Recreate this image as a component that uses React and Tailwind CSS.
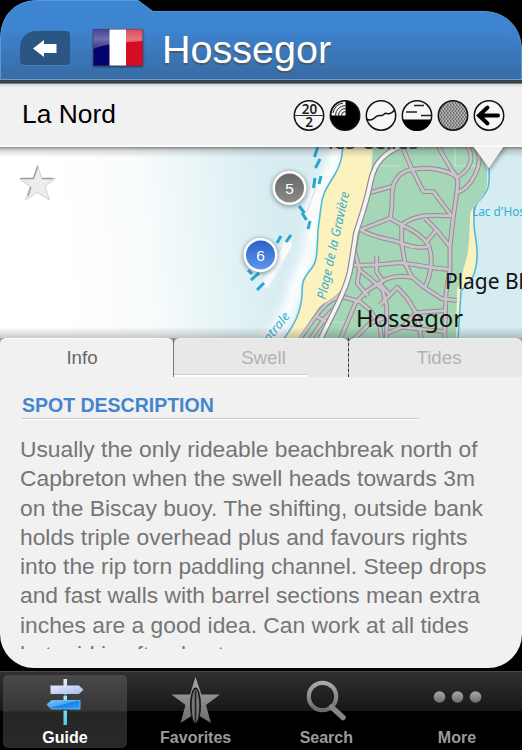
import { clsx } from 'clsx';

const lines = [
  'Usually the only rideable beachbreak north of',
  'Capbreton when the swell heads towards 3m',
  'on the Biscay buoy. The shifting, outside bank',
  'holds triple overhead plus and favours rights',
  'into the rip torn paddling channel. Steep drops',
  'and fast walls with barrel sections mean extra',
  'inches are a good idea. Can work at all tides',
  'but mid is often best.',
];

const roads = [
  'M0 158 L65 140',
  'M60 235 C72 190 60 165 72 130 C85 100 110 90 130 88 C180 80 230 90 260 110',
  'M92 10 L125 85 L160 155 L190 155 L243 225',
  'M200 10 C220 50 235 70 245 90 C265 110 265 130 260 160 L250 230 L240 320 L240 388 L228 460 L224 600',
  'M285 10 C320 50 300 90 260 113',
  'M320 25 C345 70 300 150 262 156',
  'M-30 270 L60 235 L95 255 C140 220 190 225 245 228',
  'M-30 268 C20 300 70 295 95 310 C130 325 170 325 180 315',
  'M95 255 L95 310 L105 370 L125 410 L160 440 L215 476 L265 482',
  'M95 255 C130 270 160 290 175 315 C190 350 185 400 165 440',
  'M165 235 L200 270 L240 320',
  'M200 270 L170 305',
  'M-50 375 C40 380 80 362 105 370 C150 375 180 385 240 388',
  'M-38 275 L-47 330 L-32 385 L-38 430 L-5 470',
  'M-45 490 L-8 452 L40 422 C70 405 100 408 125 412',
  'M-32 390 L0 415 L38 450 L50 500 L50 600',
  'M20 348 L20 395 L40 425',
  'M30 432 L60 465 L82 442 L112 475 L138 518 L225 512',
  'M60 465 L30 495',
  'M-85 470 L-30 485 L0 510 L30 560 L35 600',
  'M-40 480 L-90 600',
  'M50 530 L0 550 L-50 600',
  'M138 518 L100 560 L50 580',
  'M138 518 L155 600',
  'M100 562 L225 575',
];

const beachRoads = ['M343 293 C325 302 320 310 299 340', 'M338 306 C328 312 320 325 310 340', 'M322 302 L343 297', 'M316 316 L326 322'];

const dashes = [
  'M318 146 L314.500 157', 'M320 159 L315.500 168', 'M315 178 L313.500 188', 'M321 176 L319 184',
  'M299 206 L304.500 213', 'M302 213 L306.500 220', 'M310 221 L308 229', 'M281 236 L277 243',
  'M291 235 L286 242', 'M248 270 L252 274', 'M251 280 L259 273', 'M257 290 L264 283',
];

const coast =
  'M343 145 C342 158 341 164 334 176 C325 190 322 196 321 207 L318 230 C317 255 317 262 311 269 C302 280 302 283 302 296 C300 315 294 325 283 340';
const whiteRoad = 'M404 145 C385 152 375 162 371 180 C366 205 361 217 356 233 L351 265 C349 282 340 300 320 340';

function HeaderShape() {
  return (
    <svg className="absolute inset-0" width="522" height="84" viewBox="0 0 522 84">
      <defs>
        <linearGradient id="bar" x1="0" y1="0" x2="0" y2="1">
          <stop offset="0" stopColor="#3e86d3" />
          <stop offset=".35" stopColor="#3d84d0" />
          <stop offset="1" stopColor="#376ba4" />
        </linearGradient>
      </defs>
      <path
        d="M.5 80 V40 C.5 14 16 .5 38 .5 H138 L153 11.5 H483 C505 11.5 521 26 521.5 50 V80 Z"
        fill="url(#bar)"
        stroke="#5b98da"
      />
      <rect y="79" width="522" height="1" fill="#6f9cc8" />
      <rect y="80" width="522" height="3" fill="#36424c" />
      <rect y="83" width="522" height="1" fill="#777b7e" />
    </svg>
  );
}

function Header() {
  return (
    <header className="relative h-[84px] shrink-0">
      <HeaderShape />
      <div className="relative flex items-start">
        <button className="ml-5 mt-[31px] flex h-[34px] w-[50px] items-center justify-center rounded-[4px] rounded-tl-[16px] bg-[#2b5684] shadow-[0_1px_0_#4a80b8]">
          <svg width="24" height="17" viewBox="0 0 24 17">
            <path d="M0 8.500 L11 0 V4 H23.500 V13 H11 V17 Z" fill="#fff" />
          </svg>
        </button>
        <svg className="ml-[23px] mt-[29px] drop-shadow-[0_1px_1px_rgba(0,0,0,0.5)]" width="50" height="37" viewBox="0 0 50 37">
          <defs>
            <linearGradient id="gloss" x1="0" y1="0" x2="0" y2="1">
              <stop offset="0" stopColor="#fff" stopOpacity=".25" />
              <stop offset=".5" stopColor="#fff" stopOpacity=".42" />
              <stop offset="1" stopColor="#fff" stopOpacity=".2" />
            </linearGradient>
          </defs>
          <rect width="17" height="37" fill="#03036c" />
          <rect x="16.500" width="17" height="37" fill="#fff" />
          <rect x="33" width="17" height="37" fill="#d40d20" />
          <path d="M0 0 H50 V12 C33 13 12 15 0 20 Z" fill="url(#gloss)" />
          <rect x=".5" y=".5" width="49" height="36" fill="none" stroke="#5d2f60" strokeOpacity=".5" />
        </svg>
        <h1 className="ml-[19px] mt-[27px] text-[39.5px] leading-[45px] text-white [text-shadow:0_2px_1px_rgba(80,80,80,0.8)]">
          Hossegor
        </h1>
      </div>
    </header>
  );
}

function SpotIcons() {
  return (
    <svg className="mr-[16px] ml-auto" width="214" height="34" viewBox="292 96 214 34">
      <defs>
        <pattern id="stones" width="3" height="4" patternUnits="userSpaceOnUse">
          <rect width="3" height="4" fill="#6f6f6f" />
          <ellipse cx="1" cy="1" rx="1" ry=".8" fill="#d5d5d5" />
          <ellipse cx="2.300" cy="3" rx="1" ry=".8" fill="#d5d5d5" />
        </pattern>
      </defs>
      <g fill="#f6f6f6" stroke="#111" strokeWidth="1.500">
        <circle cx="309" cy="113.500" r="14.700" />
        <circle cx="345" cy="113.500" r="14.700" fill="#000" />
        <circle cx="381" cy="113.500" r="14.700" />
        <circle cx="417" cy="113.500" r="14.700" />
        <circle cx="453" cy="113.500" r="14.700" fill="url(#stones)" />
        <circle cx="489" cy="113.500" r="14.700" />
      </g>
      <path d="M294 113.500 H324" stroke="#333" />
      <g fontFamily="Noto Sans, sans-serif" fontSize="13.500" fontWeight="600" textAnchor="middle" fill="#222">
        <text x="309.500" y="111.700">20</text>
        <text x="309" y="124.700">2</text>
      </g>
      <path d="M345.500 113.500 V99.500 A14 14 0 0 0 331.500 113.500 Z" fill="#f6f6f6" />
      <g fill="none" stroke="#222" strokeWidth="1">
        <path d="M341.500 113.500 A4 4 0 0 1 345.500 109.500" />
        <path d="M338.500 113.500 A7 7 0 0 1 345.500 106.500" />
        <path d="M335.500 113.500 A10 10 0 0 1 345.500 103.500" />
        <path d="M333 111 A12.500 12.500 0 0 1 343 101" />
      </g>
      <path
        d="M366.500 117 C369 118.500 372 118.300 374.500 116 C377 112.500 379 113.500 382 113.500 C385 113 384 110.500 387 111.500 C391 112.500 393 110 395 107.500"
        fill="none"
        stroke="#111"
        strokeWidth="1.500"
      />
      <path d="M402.500 117.500 H431.500 A14.900 14.900 0 0 1 402.500 117.500 Z" fill="#000" />
      <path d="M414 103.500 H424 M406 110 H417 M421 113.500 H431" stroke="#222" strokeWidth="1.300" />
      <path d="M498 113.500 H480 M487.500 105.500 L479 113.500 L487.500 121.500" fill="none" stroke="#000" strokeWidth="4" strokeLinecap="round" />
    </svg>
  );
}

function Marker({ x, y, label, fill }) {
  return (
    <g>
      <circle cx={x} cy={y + 1} r="18" fill="#345" opacity=".45" filter="url(#soft)" />
      <circle cx={x} cy={y} r="17" fill="#fff" />
      <circle cx={x} cy={y} r="14.500" fill={fill} />
      <text x={x} y={y + 5.5} textAnchor="middle" fontSize="15.500" fill="#fff" fontFamily="Liberation Sans, sans-serif">
        {label}
      </text>
    </g>
  );
}

function SpotMap() {
  return (
    <svg className="block shrink-0" width="522" height="191" viewBox="0 147 522 191">
      <defs>
        <linearGradient id="sea" gradientUnits="userSpaceOnUse" x1="50" y1="200" x2="270" y2="180">
          <stop offset="0" stopColor="#fff" />
          <stop offset=".4" stopColor="#f9fcfc" />
          <stop offset=".72" stopColor="#e6f4f6" />
          <stop offset="1" stopColor="#d7edf1" />
        </linearGradient>
        <linearGradient id="topShade" x1="0" y1="0" x2="0" y2="1">
          <stop offset="0" stopColor="#333" stopOpacity=".55" />
          <stop offset=".35" stopColor="#444" stopOpacity=".2" />
          <stop offset="1" stopColor="#444" stopOpacity="0" />
        </linearGradient>
        <linearGradient id="botShade" x1="0" y1="1" x2="0" y2="0">
          <stop offset="0" stopColor="#444" stopOpacity=".28" />
          <stop offset="1" stopColor="#444" stopOpacity="0" />
        </linearGradient>
        <linearGradient id="grey" x1="0" y1="0" x2="0" y2="1">
          <stop offset="0" stopColor="#686868" />
          <stop offset="1" stopColor="#8a8a8a" />
        </linearGradient>
        <linearGradient id="blue" x1="0" y1="0" x2="0" y2="1">
          <stop offset="0" stopColor="#2a62c9" />
          <stop offset="1" stopColor="#5d96ec" />
        </linearGradient>
        <filter id="soft" x="-50%" y="-50%" width="200%" height="200%">
          <feGaussianBlur stdDeviation="2" />
        </filter>
        <filter id="foam" x="-50%" y="-50%" width="200%" height="200%">
          <feGaussianBlur stdDeviation="5" />
        </filter>
        <clipPath id="land">
          <path d="M373 147 C371 175 369 195 364 215 C358 235 354 250 349 270 C344 288 342 294 320 306 L297 340 H456 L457 290 C461 280 463 272 464 267 C469 250 468 250 469 240 L470 220 C470 210 472 208 476 205 C490 192 487 180 487 168 C482 155 478 152 472 147 Z" />
        </clipPath>
      </defs>
      <rect y="147" width="522" height="191" fill="url(#sea)" />
      <path d="M338 140 C334 180 316 190 314 215 C314 250 306 262 298 280 C292 300 286 325 264 345" fill="none" stroke="#fff" strokeWidth="13" filter="url(#foam)" />
      <path d="M316 187 L309 212 M287 244 L266 284" stroke="#fff" strokeWidth="6" strokeLinecap="round" filter="url(#soft)" />
      <path d="M319 186 L311 218 M290 245 L266 285" stroke="#fbfbfb" strokeWidth="4" strokeLinecap="round" />
      <path d="M316 187 L307 212 M282 247 L263 275" stroke="#dfe3e6" strokeWidth="1.500" />
      <rect x="440" y="147" width="82" height="191" fill="#d5ecf1" />
      <path d={`${coast} H440 V145 Z`} fill="#fbf2bd" />
      <path d="M472 145 C487 155 489 172 487 190 C483 200 475 200 474 210 C472 228 477 240 477 253 C476 275 472 280 461 290 L458 340 H430 V145 Z" fill="#fbf2bd" />
      <path
        d={`${coast} M489 168 C490 185 489 190 480 200 C473 206 474 215 474 225 C475 238 478 245 477 258 C476 275 472 280 461 291 L458 340`}
        fill="none"
        stroke="#4dbbdd"
        strokeWidth="1.600"
      />
      <g clipPath="url(#land)">
        <rect x="290" y="147" width="210" height="191" fill="#a4d6b7" />
        <path d="M372 166 H400 M455 147 V166 H476 M320 322 H346" fill="none" stroke="#c6e8d0" />
        <g transform="translate(370 140) scale(.33333)" fill="none" strokeLinejoin="round">
          {roads.map((d) => (
            <path key={d} d={d} stroke="#918e94" strokeWidth="14.500" />
          ))}
          {roads.map((d) => (
            <path key={d} d={d} stroke="#cbc4cb" strokeWidth="8.500" />
          ))}
        </g>
        <g fill="none">
          {beachRoads.map((d) => (
            <path key={d} d={d} stroke="#918e94" strokeWidth="4.800" />
          ))}
          {beachRoads.map((d) => (
            <path key={d} d={d} stroke="#cbc4cb" strokeWidth="2.800" />
          ))}
        </g>
      </g>
      <path d={whiteRoad} fill="none" stroke="#918b90" strokeWidth="6" />
      <path d={whiteRoad} fill="none" stroke="#f5f3f5" strokeWidth="3.600" />
      {dashes.map((d) => (
        <path key={d} d={d} stroke="#27a5cf" strokeWidth="3" />
      ))}
      <g fontFamily="Noto Sans, sans-serif">
        <g fill="#39aed3" fontStyle="italic">
          <text transform="translate(325.500 300) rotate(-77.500)" fontSize="12.800" textLength="110" lengthAdjust="spacingAndGlyphs">
            Plage de la Gravière
          </text>
          <text transform="translate(269 343) rotate(-51)" fontSize="12.800" textLength="34" lengthAdjust="spacingAndGlyphs">
            ntrale
          </text>
        </g>
        <text x="472" y="216" fontSize="11.800" fill="#30afdc">
          Lac d'Hos
        </text>
        <text x="328" y="149" fontSize="21" fill="#222">
          les Celles
        </text>
        <text x="445" y="288.500" fontSize="21.500" fill="#111" textLength="79" lengthAdjust="spacingAndGlyphs">
          Plage Bl
        </text>
        <text x="356" y="327" fontSize="23.500" fill="#111" textLength="107" lengthAdjust="spacingAndGlyphs">
          Hossegor
        </text>
      </g>
      <rect y="147" width="522" height="10" fill="url(#topShade)" />
      <rect y="327" width="522" height="11" fill="url(#botShade)" />
      <path d="M471 147 L489 171 L507 147 Z" fill="#444" opacity=".5" filter="url(#soft)" />
      <path d="M473 146 L489 168 L504 146 Z" fill="#f1f1f1" />
      <Marker x={289.5} y={188} label="5" fill="url(#grey)" />
      <Marker x={260.5} y={255} label="6" fill="url(#blue)" />
      <path
        d="M37.500 165 L41.800 178.500 H55.500 L45 186.500 L49.500 200 L37.500 192.500 L25.500 200 L30 186.500 L19 178.500 H33 Z"
        fill="#ececec"
        stroke="#d2d2d2"
        strokeWidth="1"
      />
      <path d="M21 178.500 H33.500 L37.500 167 M42 178.500 H53 M31 187 L28 196" fill="none" stroke="#9c9c9c" strokeWidth="1.300" />
    </svg>
  );
}

function Tab({ label, active, className }) {
  return (
    <button
      className={clsx(
        'h-[39px] rounded-t-[6px] border-t text-center text-[18.7px] leading-[38px]',
        active ? 'border-white bg-[#f1f1f1] text-[#666]' : 'border-[#f0f0f0] bg-[#e8e8e8] text-[#b2b2b2]',
        className
      )}
    >
      {label}
    </button>
  );
}

function Tabs() {
  return (
    <nav className="flex h-[39px] shrink-0 bg-[#9aa3a6]">
      <Tab label="Info" active className="w-[173px] pr-[9px]" />
      <div className="w-px bg-[#747b80]" />
      <div className="relative w-[174px]">
        <Tab label="Swell" className="w-full pl-[5px]" />
        <div className="absolute bottom-0 left-0 h-[3px] w-[134px] border-t border-[#cfcfcf] bg-white" />
      </div>
      <div className="w-px border-l border-dashed border-[#333] bg-[#b5b5b5]" />
      <Tab label="Tides" className="w-[173px] pl-[7px]" />
    </nav>
  );
}

function GuideIcon() {
  return (
    <svg width="38" height="48" viewBox="46 677 38 48">
      <defs>
        <linearGradient id="sign1" x1="0" y1="0" x2="1" y2="1">
          <stop offset="0" stopColor="#e4eafb" />
          <stop offset="1" stopColor="#a4bbea" />
        </linearGradient>
        <linearGradient id="sign2" x1="0" y1="0" x2="1" y2="1">
          <stop offset="0" stopColor="#82c0fa" />
          <stop offset=".45" stopColor="#4ea5f5" />
          <stop offset=".5" stopColor="#1880ea" />
          <stop offset="1" stopColor="#39a0fa" />
        </linearGradient>
        <linearGradient id="post" x1="0" y1="0" x2="0" y2="1">
          <stop offset="0" stopColor="#e3edff" />
          <stop offset="1" stopColor="#47cfe2" />
        </linearGradient>
      </defs>
      <rect x="63.500" y="678" width="3.500" height="46" fill="url(#post)" />
      <path d="M50.500 684.500 H79 L83.500 688.800 L79 693 H50.500 Z" fill="url(#sign1)" />
      <path d="M80 699.500 H51.500 L47 703.500 L51.500 708 H80 Z" fill="url(#sign2)" stroke="#59bdf5" />
      <path d="M62 694 H68.500 M62 709 H68.500" stroke="#222" />
    </svg>
  );
}

function Silver() {
  return (
    <defs>
      <linearGradient id="silver" x1="0" y1="0" x2="0" y2="1">
        <stop offset="0" stopColor="#aaa" />
        <stop offset="1" stopColor="#6c6c6c" />
      </linearGradient>
    </defs>
  );
}

function FavoritesIcon() {
  return (
    <svg width="50" height="48" viewBox="171 676 50 48">
      <Silver />
      <path d="M195.500 677 L201.500 694.500 H220 L206 705 L211 723 L195.500 713.500 L180.500 723 L185.500 705 L171.500 694.500 H190 Z" fill="url(#silver)" />
      <ellipse cx="195.500" cy="705.500" rx="5.500" ry="18" fill="#181818" />
      <ellipse cx="195.500" cy="706" rx="3.800" ry="16.500" fill="#777" />
      <path d="M195.500 691 V722" stroke="#222" strokeWidth="1.600" />
    </svg>
  );
}

function SearchIcon() {
  return (
    <svg width="40" height="42" viewBox="306 680 40 42">
      <Silver />
      <circle cx="322.500" cy="696.500" r="13.700" fill="none" stroke="url(#silver)" strokeWidth="4.200" />
      <path d="M331.500 707 L343 717.500" stroke="#858585" strokeWidth="5.500" strokeLinecap="round" />
    </svg>
  );
}

function MoreIcon() {
  return (
    <svg width="50" height="14" viewBox="432 690 50 14">
      <Silver />
      <circle cx="439.500" cy="697" r="5.800" fill="url(#silver)" />
      <circle cx="457.500" cy="697" r="5.800" fill="url(#silver)" />
      <circle cx="475.500" cy="697" r="5.800" fill="url(#silver)" />
    </svg>
  );
}

function BarItem({ label, icon, active, iconClass }) {
  return (
    <div
      className={clsx(
        'flex w-[124px] flex-col items-center rounded-[5px]',
        active && 'bg-[linear-gradient(#494949_0px,#363636_36px,#252525_37px,#292929_100%)]'
      )}
    >
      <div className={clsx('flex h-[54px]', iconClass)}>{icon}</div>
      <span className={clsx('text-[16px] leading-[20px] font-bold', active ? 'text-white' : 'text-[#9b9b9b]')}>{label}</span>
    </div>
  );
}

export default function App() {
  return (
    <div className="flex h-[750px] w-[522px] flex-col overflow-hidden bg-black font-['Liberation_Sans',Arial,sans-serif]">
      <div className="flex h-[668px] flex-col overflow-hidden rounded-b-[34px]">
        <Header />
        <div className="flex h-[63px] shrink-0 items-center border-b-2 border-[#fafafa] bg-[#f1f1f1] bg-[linear-gradient(#d8d8d8,#f1f1f1_4px)] pl-[22px]">
          <h2 className="text-[26.4px] leading-none text-black">La Nord</h2>
          <SpotIcons />
        </div>
        <SpotMap />
        <Tabs />
        <section className="flex-1 bg-[#f1f1f1] pl-5">
          <h3 className="ml-[2px] w-[397px] border-b border-[#c6c4c5] pt-[17px] pb-[2px] text-[19.5px] leading-[22px] font-bold text-[#4585cb] shadow-[0_1px_0_#fff]">
            SPOT DESCRIPTION
          </h3>
          <div className="mt-[16px] h-[214px] overflow-hidden text-[22.8px] leading-[29.3px] whitespace-nowrap text-[#757575]">
            {lines.map((line) => (
              <p key={line}>{line}</p>
            ))}
          </div>
        </section>
      </div>
      <nav className="mt-[3px] flex h-[79px] justify-between border-t border-[#484848] bg-[linear-gradient(#303030_0px,#171717_39px,#000_39px)] px-[3px] pt-[3px] pb-[2px]">
        <BarItem label="Guide" icon={<GuideIcon />} active iconClass="pt-[3px]" />
        <BarItem label="Favorites" icon={<FavoritesIcon />} iconClass="pt-px" />
        <BarItem label="Search" icon={<SearchIcon />} iconClass="pt-[5px]" />
        <BarItem label="More" icon={<MoreIcon />} iconClass="pt-[15px]" />
      </nav>
    </div>
  );
}
